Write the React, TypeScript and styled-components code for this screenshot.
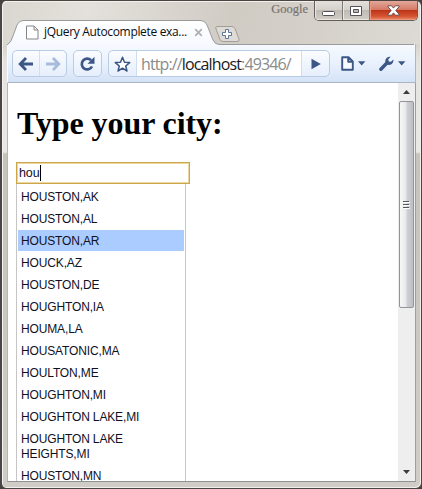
import React from "react";
import styled, { createGlobalStyle } from "styled-components";

const GlobalStyle = createGlobalStyle`
  * { box-sizing: border-box; }
  html, body { margin: 0; padding: 0; background: #44423f; overflow: hidden; }
  svg { display: block; flex: none; }
`;

const Window = styled.div`
  width: 422px;
  height: 489px;
  border: 1px solid #494745;
  border-left-width: 2px;
  border-top-color: #4b4441;
  border-radius: 6px;
  overflow: hidden;
  display: flex;
  flex-direction: column;
  padding: 0 5px 6px 5px;
  background: linear-gradient(to bottom, #dedbd6 0, #d8d4ce 45px, #e5e3e0 60px, #e9e8e5 151px, #c6c3bb 153px, #cfcdc5 100%);
  box-shadow: inset 1px 1px 0 #f4f3f1, inset -1px -1px 0 #f0efed;
`;

const TitleBar = styled.header`
  height: 43px;
  flex: none;
  display: flex;
  margin: 0 -4px 0 -4px;
  background: linear-gradient(100deg, #dad7d0 0%, #e4e1dc 20%, #d0cbc3 55%, #d5d1ca 75%, #ddd9d4 100%);
  border-top: 1px solid #f3f1ee;
  border-radius: 5px 5px 0 0;
`;

const Tab = styled.div`
  position: relative;
  width: 214px;
  height: 26px;
  margin: 17px 0 0 3px;
  display: flex;
  align-items: center;
  padding: 0 0 0 20px;
  flex: none;
`;

const TabShape = styled.svg`
  position: absolute;
  left: 0;
  top: 0;
`;

const TabTitle = styled.span`
  position: relative;
  margin-left: 5px;
  width: 150px;
  font: 12px/16px "Open Sans", sans-serif;
  letter-spacing: -0.33px;
  white-space: nowrap;
  color: #0c0e12;
`;

const Layer = styled.div`
  position: relative;
`;

const NewTab = styled.div`
  margin: 22px 0 0 -7px;
  flex: none;
`;

const Brand = styled.span`
  margin: 0 6px 0 auto;
  font: 12.5px/15px "Liberation Serif", serif;
  color: #77736f;
  -webkit-text-stroke: 0.2px #77736f;
`;

const WindowControls = styled.div`
  display: flex;
  width: 104px;
  height: 20px;
  margin: -1px 2px 0 0;
  border: 1px solid #625e5b;
  border-top: 0;
  border-radius: 0 0 5px 5px;
  overflow: hidden;
  flex: none;
`;

const Control = styled.div<{ $w: number; $close?: boolean }>`
  width: ${(p) => p.$w}px;
  height: 19px;
  display: flex;
  align-items: center;
  justify-content: center;
  border-right: ${(p) => (p.$close ? "0" : "1px solid #7d7975")};
  box-shadow: inset 1px -1px 0 ${(p) => (p.$close ? "#ea9a80" : "#ebe8e3")};
  background: ${(p) =>
    p.$close
      ? "linear-gradient(#e2a99b 0, #d67a66 45%, #bd3519 50%, #d45432 80%, #ed8b68 100%)"
      : "linear-gradient(#e3e0dc 0, #d5d1cb 45%, #bfbbb4 50%, #d2cec7 100%)"};
`;

const Toolbar = styled.nav`
  height: 39px;
  flex: none;
  display: flex;
  align-items: flex-start;
  padding: 6px 0 0 4px;
  border-left: 1px solid #f8fbff;
  border-right: 1px solid #a7b7cc;
  border-bottom: 1px solid #a7b5c5;
  background: linear-gradient(#f7faff 0, #e9f1fd 50%, #d5e3f7 100%);
`;

const ButtonGroup = styled.div<{ $w: number; $gap: number }>`
  width: ${(p) => p.$w}px;
  height: 27px;
  margin-right: ${(p) => p.$gap}px;
  display: flex;
  align-items: stretch;
  overflow: hidden;
  flex: none;
  border: 1px solid #b9cce6;
  border-radius: 5px;
  background: linear-gradient(#fafcff, #e6effc);
`;

const Cell = styled.div<{ $line?: boolean }>`
  flex: 1;
  display: flex;
  align-items: center;
  justify-content: center;
  border-left: ${(p) => (p.$line ? "1px solid #d2dff1" : "0")};
`;

const Address = styled.div`
  width: 166px;
  flex: none;
  padding-left: 4px;
  border: solid #d0ddf0;
  border-width: 0 1px;
  background: #fff;
  font: 16px/26px "Open Sans", sans-serif;
  letter-spacing: -0.87px;
  white-space: nowrap;
  color: #8b8b8b;
`;

const Host = styled.span`
  color: #17191c;
`;

const Menu = styled.div<{ $gap: number }>`
  display: flex;
  align-items: center;
  gap: 4px;
  height: 27px;
  margin-right: ${(p) => p.$gap}px;
`;

const Viewport = styled.div`
  display: flex;
  flex: 1;
  min-height: 0;
  border-right: 1px solid #9a9fa6;
  border-bottom: 1px solid #8f9394;
  border-left: 1px solid #b5b5b3;
  background: #fff;
`;

const Page = styled.main`
  flex: 1;
  min-width: 0;
  overflow: hidden;
  padding: 0 0 0 8px;
`;

const Heading = styled.h1`
  margin: 21px 0 20px 1px;
  font: bold 32px/38px "Liberation Serif", serif;
  letter-spacing: -0.08px;
  color: #000;
`;

const SearchField = styled.div`
  width: 174px;
  height: 22px;
  padding-left: 2px;
  display: flex;
  align-items: center;
  border: 1px solid #cba64d;
  box-shadow: inset 0 0 0 1px #ecd79e;
  background: #fff;
  font: 12.5px/16px "Liberation Sans", Arial, sans-serif;
  letter-spacing: -0.1px;
  color: #10102a;
`;

const Caret = styled.span`
  width: 1px;
  height: 16px;
  background: #000;
`;

const Suggestions = styled.ul`
  width: 170px;
  margin: 0;
  padding: 2px 1px 0;
  border: solid #c6c6c6;
  border-width: 0 1px;
  list-style: none;
`;

const Suggestion = styled.li<{ $active?: boolean }>`
  margin-bottom: 1px;
  padding: 4px 30px 2px 3px;
  background: ${(p) => (p.$active ? "#aaccff" : "#fff")};
  font: 12px/15px "Liberation Sans", Arial, sans-serif;
  letter-spacing: -0.14px;
  color: #10101f;
`;

const ScrollTrack = styled.div`
  width: 17px;
  flex: none;
  display: flex;
  flex-direction: column;
  align-items: center;
  background: #eee;
`;

const ScrollArrow = styled.div`
  width: 100%;
  height: 18px;
  flex: none;
  display: flex;
  align-items: center;
  justify-content: center;
`;

const ScrollThumb = styled.div`
  width: 15px;
  height: 207px;
  flex: none;
  display: flex;
  align-items: center;
  justify-content: center;
  border: 1px solid #929499;
  border-radius: 2px;
  background: linear-gradient(to right, #f7f7f7 0, #e8e9eb 45%, #cfd0d4 55%, #bdbec3 100%);
`;

const Spacer = styled.div`
  flex: 1;
`;

const navy = "#3c5785";

const DownCaret = () => (
  <svg width="8" height="5" viewBox="0 0 8 5"><path d="M0 .3h7.4L3.7 4.5z" fill={navy} /></svg>
);

const cities = [
  "HOUSTON,AK",
  "HOUSTON,AL",
  "HOUSTON,AR",
  "HOUCK,AZ",
  "HOUSTON,DE",
  "HOUGHTON,IA",
  "HOUMA,LA",
  "HOUSATONIC,MA",
  "HOULTON,ME",
  "HOUGHTON,MI",
  "HOUGHTON LAKE,MI",
  "HOUGHTON LAKE HEIGHTS,MI",
  "HOUSTON,MN",
];

export default function App() {
  return (
    <>
      <GlobalStyle />
      <Window>
        <TitleBar>
          <Tab>
            <TabShape width="412" height="27" viewBox="0 0 412 27">
              <defs>
                <linearGradient id="tabFill" x1="0" y1="0" x2="0" y2="1">
                  <stop offset="0" stopColor="#fff" />
                  <stop offset="1" stopColor="#f6f9ff" />
                </linearGradient>
              </defs>
              <path d="M1 27V26Q5 24 7 17L11 6Q13 1.5 17 1.5H195Q199 1.5 201 6L207 21Q209 25.5 213 25.5H408V27Z" fill="url(#tabFill)" />
              <path d="M1 26Q5 24 7 17L11 6Q13 1.5 17 1.5H195Q199 1.5 201 6L207 21Q209 25.5 213 25.5H408" fill="none" stroke="#989a9c" />
            </TabShape>
            <Layer>
              <svg width="13" height="15" viewBox="0 0 13 15"><path d="M.5 1h7.5l4 4v9H.5zM8 1v4h4" fill="#fff" stroke="#858585" /></svg>
            </Layer>
            <TabTitle>jQuery Autocomplete exa...</TabTitle>
            <Layer>
              <svg width="9" height="9" viewBox="0 0 9 9"><path d="M1.2 1.2l6.6 6.6m0-6.6l-6.6 6.6" stroke="#b2b2b2" strokeWidth="1.9" /></svg>
            </Layer>
          </Tab>
          <NewTab>
            <svg width="28" height="20" viewBox="0 0 28 20">
              <path d="M4 2.5h15q2 0 3 2l4 10.5q1 2.5-2 2.5H10q-2 0-3-2L3 5Q2 2.5 4 2.5z" fill="#dedbd7" stroke="#a29f9b" />
              <path d="M12.5 5.5h3v3h3v3h-3v3h-3v-3h-3v-3h3z" fill="#fff" stroke="#5a7896" />
            </svg>
          </NewTab>
          <Brand>Google</Brand>
          <WindowControls>
            <Control $w={28}>
              <svg width="13" height="14" viewBox="0 0 13 14"><rect x=".5" y="7.5" width="12" height="4" rx="1" fill="#fff" stroke="#55535a" /></svg>
            </Control>
            <Control $w={27}>
              <svg width="12" height="10" viewBox="0 0 12 10"><path d="M.5.5h11v9H.5zM3.5 3.5v3h5v-3z" fill="#fff" fillRule="evenodd" stroke="#55535a" /></svg>
            </Control>
            <Control $w={47} $close>
              <svg width="13" height="11" viewBox="0 0 13 11"><path d="M1 .8h3.6l1.9 2.3L8.4.8H12v1L8.8 5.5 12 9.2v1H8.4L6.5 7.9l-1.9 2.3H1v-1l3.2-3.7L1 1.8z" fill="#fff" stroke="#66423f" strokeWidth=".9" /></svg>
            </Control>
          </WindowControls>
        </TitleBar>
        <Toolbar>
          <ButtonGroup $w={55} $gap={6}>
            <Cell>
              <svg width="16" height="14" viewBox="0 0 16 14"><path d="M8 1L2.2 7 8 13M3 7h12" fill="none" stroke={navy} strokeWidth="2.8" /></svg>
            </Cell>
            <Cell $line>
              <svg width="16" height="14" viewBox="0 0 16 14"><path d="M8 1l5.8 6L8 13M13 7H1" fill="none" stroke="#a9bbdc" strokeWidth="2.8" /></svg>
            </Cell>
          </ButtonGroup>
          <ButtonGroup $w={29} $gap={6}>
            <Cell>
              <svg width="17" height="16" viewBox="0 0 17 16">
                <path d="M12 4.2A5.4 5.4 0 1 0 13 10.5" fill="none" stroke={navy} strokeWidth="2.7" />
                <path d="M15.5.8v7H8.5z" fill={navy} />
              </svg>
            </Cell>
          </ButtonGroup>
          <ButtonGroup $w={222} $gap={11}>
            <Cell>
              <svg width="17" height="16" viewBox="0 0 17 16"><path d="M8.5 1.3l2 4.9 5.2.4-4 3.4 1.3 5-4.5-2.8L4 15l1.3-5-4-3.4 5.2-.4z" fill="#fff" stroke={navy} strokeWidth="1.5" strokeLinejoin="round" /></svg>
            </Cell>
            <Address>http://<Host>localhost</Host>:49346/</Address>
            <Cell>
              <svg width="10" height="12" viewBox="0 0 10 12"><path d="M.5.8L9.8 6 .5 11.2z" fill={navy} /></svg>
            </Cell>
          </ButtonGroup>
          <Menu $gap={13}>
            <svg width="13" height="15" viewBox="0 0 13 15"><path d="M1.2 1.2h6.3l4.3 4.3v8.3H1.2zM7.2 1.2v4.6h4.6" fill="#f8fbff" stroke={navy} strokeWidth="1.9" strokeLinejoin="round" /></svg>
            <DownCaret />
          </Menu>
          <Menu $gap={0}>
            <svg width="15" height="15" viewBox="0 0 15 15">
              <path d="M1.9 13.2l6.2-6.4" stroke={navy} strokeWidth="3.4" strokeLinecap="round" />
              <path d="M11.7.8L9.3 3.2l.4 2.2 2.2.4 2.5-2.3c.4 3-1.6 5.5-4.4 5.4-2.5 0-4.2-2.2-3.6-4.8C6.9 1.7 9.3.2 11.7.8z" fill={navy} />
            </svg>
            <DownCaret />
          </Menu>
        </Toolbar>
        <Viewport>
          <Page>
            <Heading>Type your city:</Heading>
            <SearchField>hou<Caret /></SearchField>
            <Suggestions>
              {cities.map((city) => (
                <Suggestion key={city} $active={city === "HOUSTON,AR"}>{city}</Suggestion>
              ))}
            </Suggestions>
          </Page>
          <ScrollTrack>
            <ScrollArrow><svg width="7" height="4" viewBox="0 0 7 4"><path d="M3.5 0L7 4H0z" fill="#3c3c3c" /></svg></ScrollArrow>
            <ScrollThumb>
              <svg width="7" height="8" viewBox="0 0 7 8"><path d="M0 .5h6M0 3.5h6M0 6.5h6" stroke="#55575c" /><path d="M1 1.5h6M1 4.5h6M1 7.5h6" stroke="#fff" /></svg>
            </ScrollThumb>
            <Spacer />
            <ScrollArrow><svg width="7" height="4" viewBox="0 0 7 4"><path d="M3.5 4L7 0H0z" fill="#3c3c3c" /></svg></ScrollArrow>
          </ScrollTrack>
        </Viewport>
      </Window>
    </>
  );
}
